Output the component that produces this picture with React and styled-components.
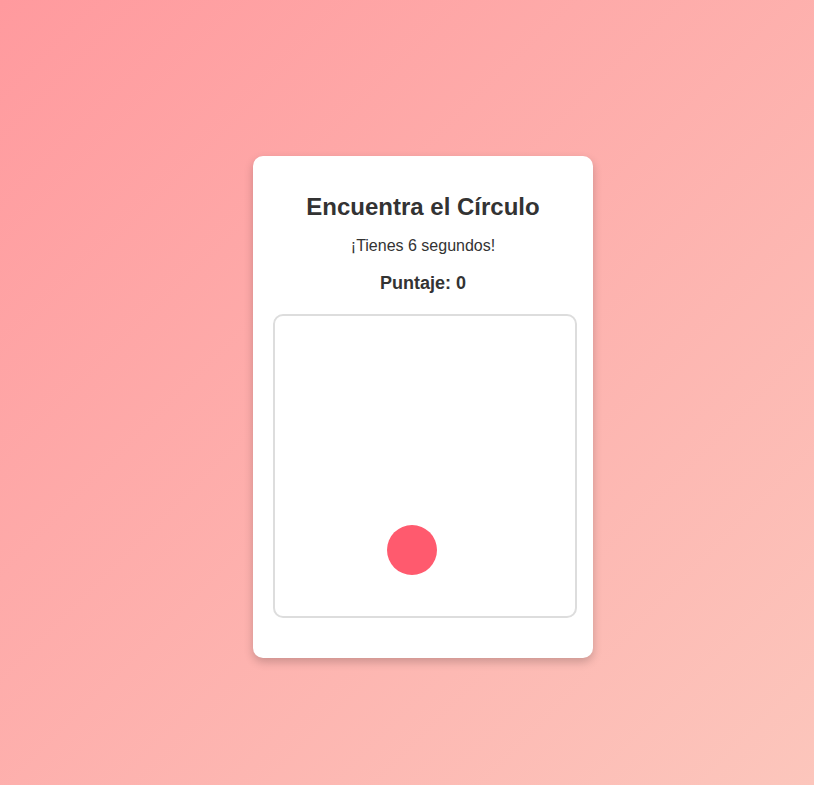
import React, { useState } from "react";
import styled, { createGlobalStyle } from "styled-components";

const GlobalStyle = createGlobalStyle`
    * {
        box-sizing: border-box;
    }
    body {
        margin: 0;
        font-family: "Liberation Sans", Arial, sans-serif;
        background: linear-gradient(135deg, #ff9a9e 0%, #fcc6bc 100%);
        min-height: 100vh;
    }
`;

const Page = styled.div`
    min-height: 100vh;
    display: flex;
    align-items: center;
    justify-content: center;
    padding: 28px 0 0 32px;
`;

const Card = styled.div`
    width: 340px;
    padding: 20px;
    background: #fff;
    border-radius: 10px;
    box-shadow: 0 4px 10px rgba(0, 0, 0, 0.2);
    text-align: center;
    color: #333;
`;

const Title = styled.h1`
    font-size: 24px;
    margin: 17px 0 15px;
`;

const Timer = styled.p`
    font-size: 16px;
    margin: 16px 0;
`;

const Score = styled.h3`
    font-size: 18px;
    margin: 18px 0 20px;
`;

const GameArea = styled.div`
    position: relative;
    box-sizing: content-box;
    width: 300px;
    height: 300px;
    margin: 20px 0;
    border: 2px solid #ddd;
    border-radius: 10px;
    background: #fff;
`;

const Target = styled.div`
    position: absolute;
    width: 50px;
    height: 50px;
    border-radius: 50%;
    background: #ff5a6e;
    cursor: pointer;
`;

export default function App() {
    const [score, setScore] = useState(0);
    const [pos] = useState({ x: 112, y: 209 });
    return (
        <Page>
            <GlobalStyle />
            <Card>
                <Title>Encuentra el Círculo</Title>
                <Timer>¡Tienes 6 segundos!</Timer>
                <Score>Puntaje: {score}</Score>
                <GameArea>
                    <Target style={{ left: pos.x, top: pos.y }} onClick={() => setScore(score + 1)} />
                </GameArea>
            </Card>
        </Page>
    );
}
